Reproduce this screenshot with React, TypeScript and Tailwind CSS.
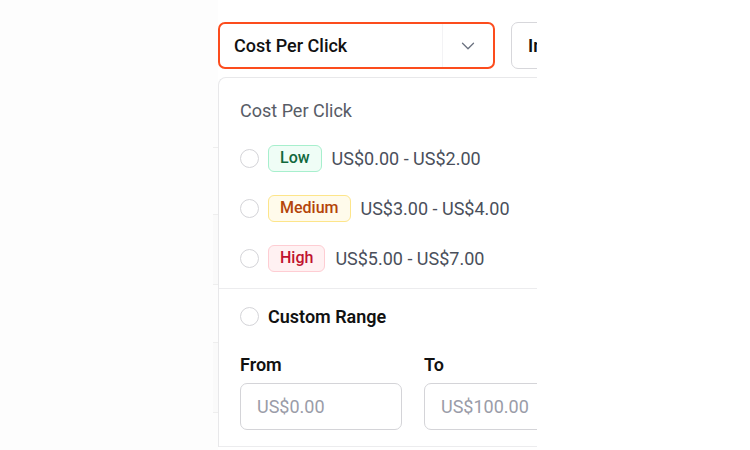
import { ChevronDown } from 'lucide-react';

const tiers = [
  {
    label: 'Low',
    range: 'US$0.00 - US$2.00',
    badge: 'border-[#a7efcd] bg-[#effdf6] text-[#11683c]',
  },
  {
    label: 'Medium',
    range: 'US$3.00 - US$4.00',
    badge: 'border-[#fde58a] bg-[#fffbeb] text-[#b44509]',
  },
  {
    label: 'High',
    range: 'US$5.00 - US$7.00',
    badge: 'border-[#fecdd3] bg-[#fff1f2] text-[#c0132f]',
  },
];

function Radio() {
  return <span className="block h-[19px] w-[19px] shrink-0 rounded-full border-[1.5px] border-[#d4d4d8] bg-white" />;
}

export default function App() {
  return (
    <div
      className="flex h-[450px] w-[750px] overflow-hidden bg-white"
      style={{ fontFamily: 'Roboto, "Noto Sans", sans-serif' }}
    >
      <div className="w-[213px] shrink-0 bg-[#fdfdfd]" />

      {/* table rows peeking out behind the dropdown */}
      <div className="flex w-[5px] shrink-0 flex-col bg-[#fdfdfd]">
        <div className="h-[148px] border-b border-[#eeeeee]" />
        <div className="h-[67px] border-b border-[#eeeeee]" />
        <div className="h-[70px] border-b border-[#eeeeee] bg-[#fafafa]" />
        <div className="h-[58px] border-b border-[#eeeeee]" />
        <div className="h-[70px] border-b border-[#eeeeee] bg-[#fafafa]" />
      </div>

      <div className="w-[319px] shrink-0 overflow-hidden">
        <div className="flex w-[420px] gap-4 pt-[22px]">
          <button className="flex h-[47px] w-[277px] shrink-0 items-center rounded-[7px] border-2 border-[#fc4c1d] bg-white pl-[14px]">
            <span className="flex-1 text-left text-[18px] font-medium text-[#111]">Cost Per Click</span>
            <span className="flex h-full w-[51px] items-center justify-center border-l border-[#f3f3f5]">
              <ChevronDown size={22} strokeWidth={1.4} className="text-[#6b7280]" />
            </span>
          </button>
          <button className="flex h-[47px] shrink-0 items-center rounded-[7px] border border-[#d7d7db] bg-white px-4 text-[18px] font-semibold text-[#111]">
            In
          </button>
        </div>

        <div className="mt-2 w-[420px] rounded-tl-lg border-l border-t border-[#e8e8ea] bg-white">
          <div className="border-b border-[#ececee] pb-[5px]">
            <p className="ml-[21px] mt-[21px] h-6 text-[18px] leading-6 text-[#585c66]">Cost Per Click</p>
            <div className="mt-[10px] flex flex-col">
              {tiers.map(tier => (
                <div key={tier.label} className="flex h-[50px] items-center pl-[21px]">
                  <Radio />
                  <span
                    className={`ml-[9px] flex h-[27px] items-center rounded-[6px] border px-[11px] text-[16px] font-medium ${tier.badge}`}
                  >
                    {tier.label}
                  </span>
                  <span className="ml-[10px] text-[18px] text-[#4a4f5b]">{tier.range}</span>
                </div>
              ))}
            </div>
          </div>

          <div className="border-b border-[#ececee] pb-4 pl-[21px] pt-[15px]">
            <div className="flex h-6 items-center">
              <Radio />
              <span className="ml-[9px] text-[18px] font-semibold text-[#111]">Custom Range</span>
            </div>
            <div className="mt-[25px] flex gap-[22px]">
              <div className="flex flex-col gap-[6px]">
                <span className="h-6 text-[18px] font-semibold leading-6 text-[#111]">From</span>
                <div className="flex h-[47px] w-[162px] items-center rounded-[7px] border border-[#d4d4d8] pl-4 text-[18px] text-[#9a9ca8]">
                  US$0.00
                </div>
              </div>
              <div className="flex flex-col gap-[6px]">
                <span className="h-6 text-[18px] font-semibold leading-6 text-[#111]">To</span>
                <div className="flex h-[47px] w-[162px] items-center rounded-[7px] border border-[#d4d4d8] pl-4 text-[18px] text-[#9a9ca8]">
                  US$100.00
                </div>
              </div>
            </div>
          </div>
        </div>
      </div>

      <div className="flex-1 bg-white" />
    </div>
  );
}
